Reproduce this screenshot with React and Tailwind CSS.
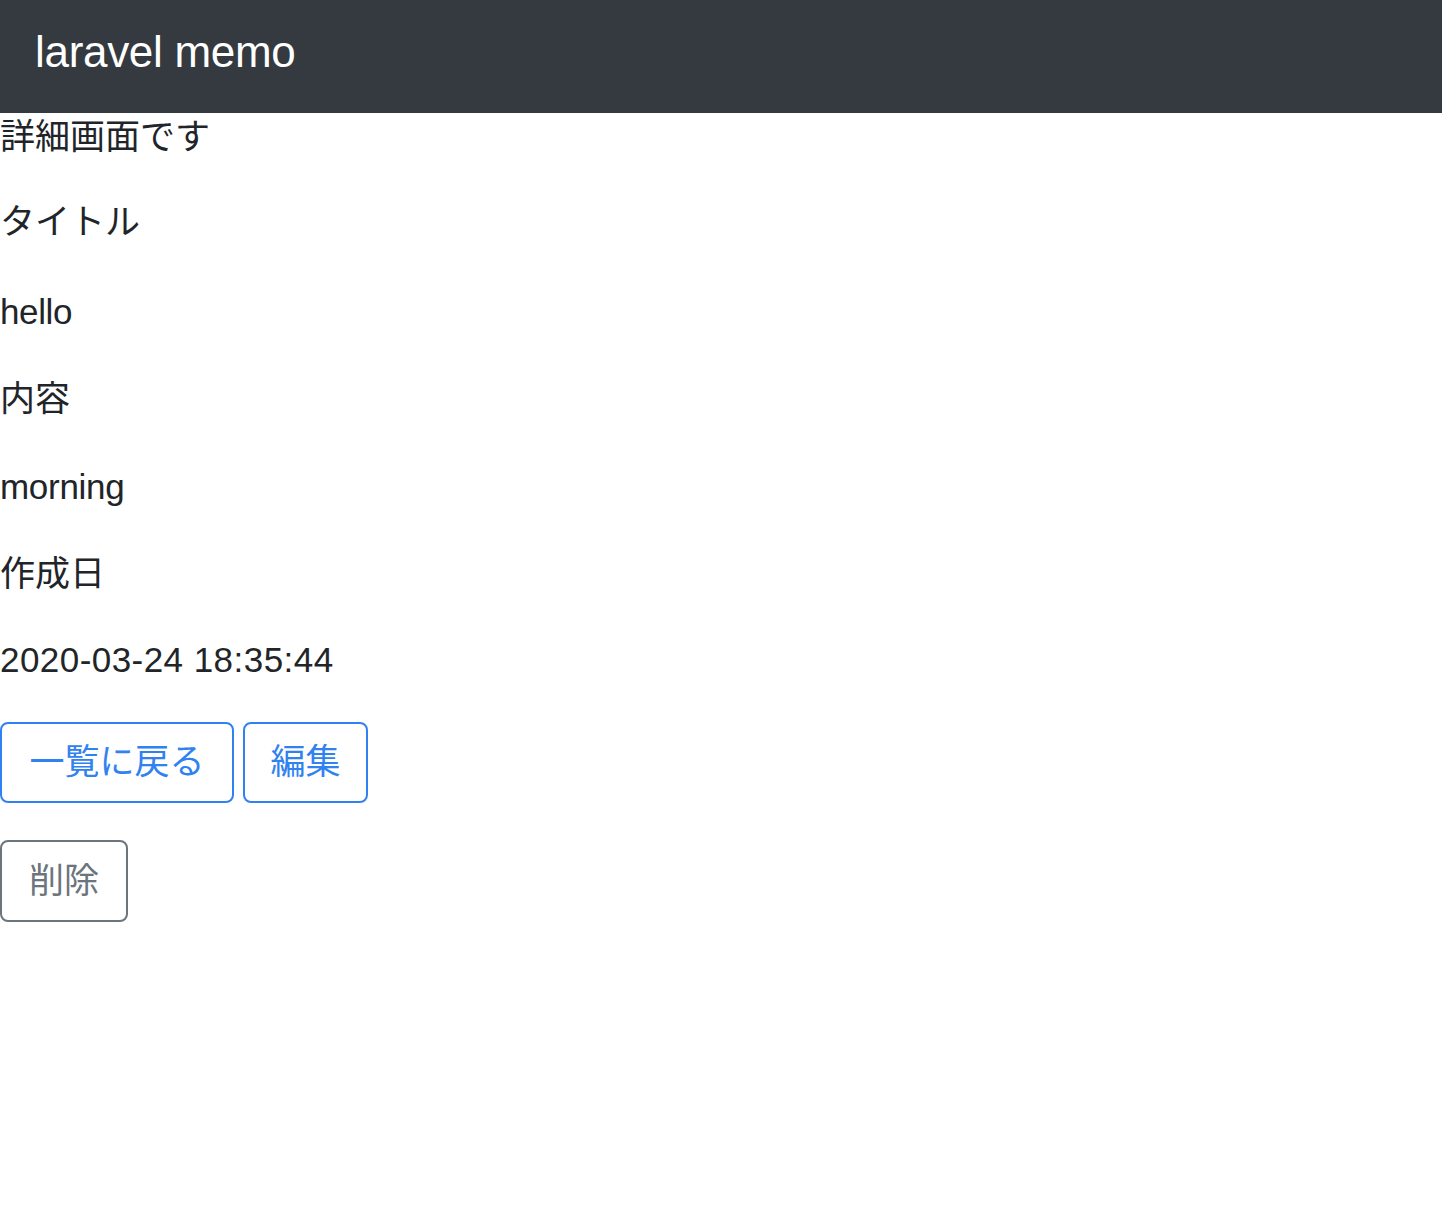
import React from 'react';

const font = { fontFamily: '"Liberation Sans", "Noto Sans CJK JP", sans-serif' };

export default function App() {
  return (
    <div className="min-h-[1212px] bg-white text-[#212529]" style={font}>
      {/* Navbar */}
      <nav className="h-[113px] bg-[#343a40] flex items-center px-[35px] pb-[10px]">
        <a href="#" className="text-white text-[44px] leading-[66px] tracking-[-0.3px]">
          laravel memo
        </a>
      </nav>

      {/* Detail */}
      <div className="text-[35px]">
        <div className="h-[48px] leading-[48px] mb-[35px]">詳細画面です</div>
        <p className="leading-[52.5px] mb-[35px]">タイトル</p>
        <p className="leading-[52.5px] mb-[35px] pt-[2px] tracking-[-0.4px]">hello</p>
        <p className="leading-[52.5px] mb-[33px]">内容</p>
        <p className="leading-[52.5px] mb-[35px] pt-[2px] tracking-[-0.3px]">morning</p>
        <p className="leading-[52.5px] mb-[33px]">作成日</p>
        <p className="leading-[52.5px] mb-[36px] tracking-[0.45px]">2020-03-24 18:35:44</p>

        <div className="flex gap-[9px]">
          <a
            href="#"
            className="w-[234px] h-[81px] flex items-center justify-center border-2 border-[#3082f0] text-[#3082f0] rounded-[8px]"
          >
            一覧に戻る
          </a>
          <a
            href="#"
            className="w-[125px] h-[81px] flex items-center justify-center border-2 border-[#3082f0] text-[#3082f0] rounded-[8px]"
          >
            編集
          </a>
        </div>

        <form className="mt-[37px]">
          <button
            type="button"
            className="w-[128px] h-[82px] flex items-center justify-center border-2 border-[#6c757d] text-[#6c757d] rounded-[8px]"
          >
            削除
          </button>
        </form>
      </div>
    </div>
  );
}
